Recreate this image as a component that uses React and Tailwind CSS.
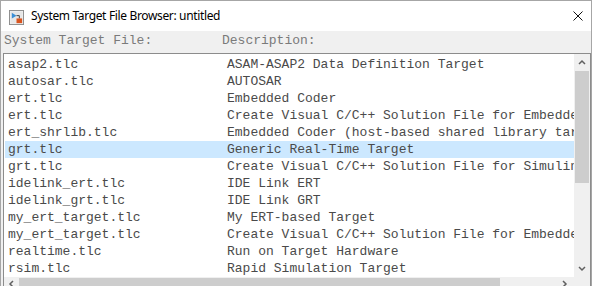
import React from "react";

const rows = [
  ["asap2.tlc", "ASAM-ASAP2 Data Definition Target"],
  ["autosar.tlc", "AUTOSAR"],
  ["ert.tlc", "Embedded Coder"],
  ["ert.tlc", "Create Visual C/C++ Solution File for Embedded Coder"],
  ["ert_shrlib.tlc", "Embedded Coder (host-based shared library target)"],
  ["grt.tlc", "Generic Real-Time Target"],
  ["grt.tlc", "Create Visual C/C++ Solution File for Simulink Coder"],
  ["idelink_ert.tlc", "IDE Link ERT"],
  ["idelink_grt.tlc", "IDE Link GRT"],
  ["my_ert_target.tlc", "My ERT-based Target"],
  ["my_ert_target.tlc", "Create Visual C/C++ Solution File for Embedded Coder"],
  ["realtime.tlc", "Run on Target Hardware"],
  ["rsim.tlc", "Rapid Simulation Target"],
];

const mono = { fontFamily: "'Liberation Mono', 'Courier New', monospace" };

function Chevron({ dir }) {
  const pts = {
    up: "1,5 4,2 7,5",
    down: "1,2 4,5 7,2",
    left: "5,1 2,4 5,7",
    right: "2,1 5,4 2,7",
  }[dir];
  return (
    <svg width="8" height="8" viewBox="0 0 8 8">
      <polyline points={pts} fill="none" stroke="#606060" strokeWidth="1.5" />
    </svg>
  );
}

function AppIcon() {
  return (
    <svg width="15" height="15" viewBox="0 0 16 16">
      <rect x="0.5" y="0.5" width="15" height="15" fill="#f4f4f4" stroke="#8a8a8a" />
      <rect x="1.5" y="1.5" width="13" height="13" fill="#e6e6e6" />
      <polygon points="3,3 3,9 8,6" fill="#3b8fd6" />
      <line x1="8" y1="6" x2="11" y2="6" stroke="#3a3a3a" />
      <line x1="11" y1="6" x2="11" y2="9" stroke="#3a3a3a" />
      <rect x="8" y="9" width="6" height="5" fill="#d9541e" />
    </svg>
  );
}

export default function App() {
  return (
    <div className="w-[594px] h-[286px] bg-white overflow-hidden">
      <div className="w-[592px] h-[286px] border border-b-0 border-[#a6a6a6] flex flex-col">
        {/* Title bar */}
        <div className="h-[30px] bg-white flex items-center shrink-0">
          <div className="ml-[8px] mt-[2px] flex items-center">
            <AppIcon />
          </div>
          <div
            className="ml-[7px] text-[12px] tracking-[-0.35px] text-black"
            style={{ fontFamily: "'Segoe UI', 'Noto Sans', 'Liberation Sans', sans-serif" }}
          >
            System Target File Browser: untitled
          </div>
          <div className="ml-auto mr-[8px] flex items-center">
            <svg width="10" height="10" viewBox="0 0 10 10">
              <path d="M0.5 0.5 L9.5 9.5 M9.5 0.5 L0.5 9.5" stroke="#111" strokeWidth="1" />
            </svg>
          </div>
        </div>
        {/* Body */}
        <div className="flex-1 bg-[#f0f0f0] flex flex-col">
          <div className="h-[22px] flex pt-[1px] pl-[3px] text-[13px] leading-[17px] text-[#7a7a7a] shrink-0" style={mono}>
            <div className="w-[218px] whitespace-pre">System Target File:</div>
            <div className="whitespace-pre">Description:</div>
          </div>
          <div className="ml-[2px] w-[588px] flex-1 border border-b-0 border-[#8c8c8c] bg-white flex flex-col">
            <div className="flex h-[223px]">
              <div className="flex-1 overflow-hidden pt-[2px] pl-[1px]">
                {rows.map(([n, d], i) => (
                  <div
                    key={i}
                    className={`h-[17px] flex items-center pl-[3px] text-[13px] leading-[17px] whitespace-pre text-[#4a4a4a] ${i === 5 ? "bg-[#cce8ff]" : ""}`}
                    style={mono}
                  >
                    <div className="w-[219px] shrink-0">{n}</div>
                    <div className="shrink-0">{d}</div>
                  </div>
                ))}
              </div>
              <div className="w-[16px] bg-[#f0f0f0] flex flex-col shrink-0">
                <div className="h-[17px] flex items-center justify-center">
                  <Chevron dir="up" />
                </div>
                <div className="h-[112px] mx-[1px] bg-[#cdcdcd]" />
                <div className="flex-1" />
                <div className="h-[17px] flex items-center justify-center">
                  <Chevron dir="down" />
                </div>
              </div>
            </div>
            <div className="flex-1 bg-[#f0f0f0] flex">
              <div className="w-[15px] flex justify-center pt-[3px]">
                <Chevron dir="left" />
              </div>
              <div className="w-[481px] bg-[#cdcdcd] mt-[1px]" />
              <div className="flex-1" />
              <div className="w-[17px] flex justify-center pt-[3px] mr-[17px]">
                <Chevron dir="right" />
              </div>
            </div>
          </div>
        </div>
      </div>
    </div>
  );
}
